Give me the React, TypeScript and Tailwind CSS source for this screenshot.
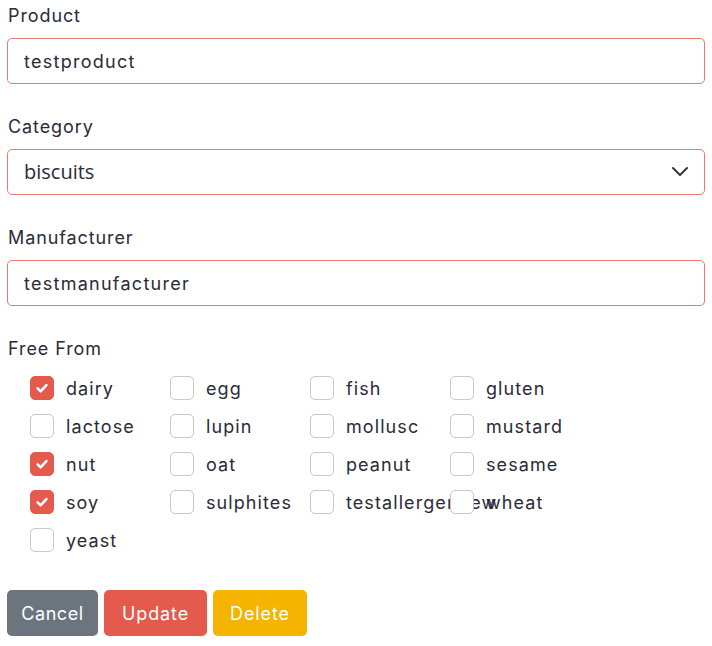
import React, { useState } from "react";

const font = { fontFamily: "Inter, 'Open Sans', sans-serif" };

const allergens = [
  "dairy", "egg", "fish", "gluten",
  "lactose", "lupin", "mollusc", "mustard",
  "nut", "oat", "peanut", "sesame",
  "soy", "sulphites", "testallergennew", "wheat",
  "yeast",
];

const Check = ({ label, checked, onToggle }: { label: string; checked: boolean; onToggle: () => void }) => (
  <label className="flex items-center h-[26px] whitespace-nowrap cursor-pointer" onClick={onToggle}>
    <span
      className={
        "relative flex items-center justify-center w-6 h-6 shrink-0 rounded-[5px] border " +
        (checked ? "bg-[#e45b4e] border-[#e45b4e]" : "bg-white border-[#c8c8c8]")
      }
    >
      {checked && (
        <svg width="16" height="16" viewBox="0 0 20 20" fill="none">
          <path d="M4.5 10.5l3.8 3.8 7.2-8" stroke="white" strokeWidth="3.2" strokeLinecap="round" strokeLinejoin="round" />
        </svg>
      )}
    </span>
    <span className="ml-3 text-[18px] tracking-[0.06em] text-[#2b2b38]">{label}</span>
  </label>
);

const App = () => {
  const [checked, setChecked] = useState<string[]>(["dairy", "nut", "soy"]);

  const toggle = (name: string) => {
    setChecked((prev) => (prev.includes(name) ? prev.filter((c) => c !== name) : [...prev, name]));
  };

  return (
    <div className="px-[7px] bg-white min-h-screen" style={font}>
      <div>
        <div className="h-[30px] pl-px flex items-center text-[18px] tracking-[0.05em] text-[#2b2b38]">Product</div>
        <input
          defaultValue="testproduct"
          className="mt-2 w-full h-[46px] px-4 rounded-[5px] border border-[#ea7a6f] text-[18px] tracking-[0.07em] text-[#2b2b38] outline-none"
          style={font}
        />
      </div>

      <div className="mt-[27px]">
        <div className="h-[30px] pl-px flex items-center text-[18px] tracking-[0.05em] text-[#2b2b38]">Category</div>
        <div className="relative mt-2">
          <select
            defaultValue="biscuits"
            className="appearance-none w-full h-[46px] px-4 rounded-[5px] border border-[#ea7a6f] bg-white text-[20px] text-[#2b2b38] outline-none"
            style={{ fontFamily: "'Open Sans', sans-serif" }}
          >
            <option value="biscuits">biscuits</option>
            <option value="cakes">cakes</option>
            <option value="bread">bread</option>
          </select>
          <svg
            className="absolute right-[17px] top-[17px] pointer-events-none"
            width="16"
            height="12"
            viewBox="0 0 16 12"
            fill="none"
          >
            <path d="M1 2l7 7 7-7" stroke="#343a40" strokeWidth="2" strokeLinecap="round" strokeLinejoin="round" />
          </svg>
        </div>
      </div>

      <div className="mt-[27px]">
        <div className="h-[30px] pl-px flex items-center text-[18px] tracking-[0.05em] text-[#2b2b38]">Manufacturer</div>
        <input
          defaultValue="testmanufacturer"
          className="mt-2 w-full h-[46px] px-4 rounded-[5px] border border-[#ea7a6f] text-[18px] tracking-[0.07em] text-[#2b2b38] outline-none"
          style={font}
        />
      </div>

      <div className="mt-[27px]">
        <div className="h-[30px] pl-px flex items-center text-[18px] tracking-[0.05em] text-[#2b2b38]">Free From</div>
        <div className="mt-3 pl-[23px] grid grid-cols-[repeat(4,140px)] gap-y-3">
          {allergens.map((a) => (
            <Check key={a} label={a} checked={checked.includes(a)} onToggle={() => toggle(a)} />
          ))}
        </div>
      </div>

      <div className="mt-[37px] flex gap-[6px]">
        <button className="h-[46px] w-[91px] rounded-[5px] bg-[#6c757d] text-white text-[18px] tracking-[0.03em]">Cancel</button>
        <button className="h-[46px] w-[103px] rounded-[5px] bg-[#e45b4e] text-white text-[18px] tracking-[0.05em]">Update</button>
        <button className="h-[46px] w-[94px] rounded-[5px] bg-[#f4b400] text-white text-[18px] tracking-[0.05em]">Delete</button>
      </div>
    </div>
  );
};

export default App;
